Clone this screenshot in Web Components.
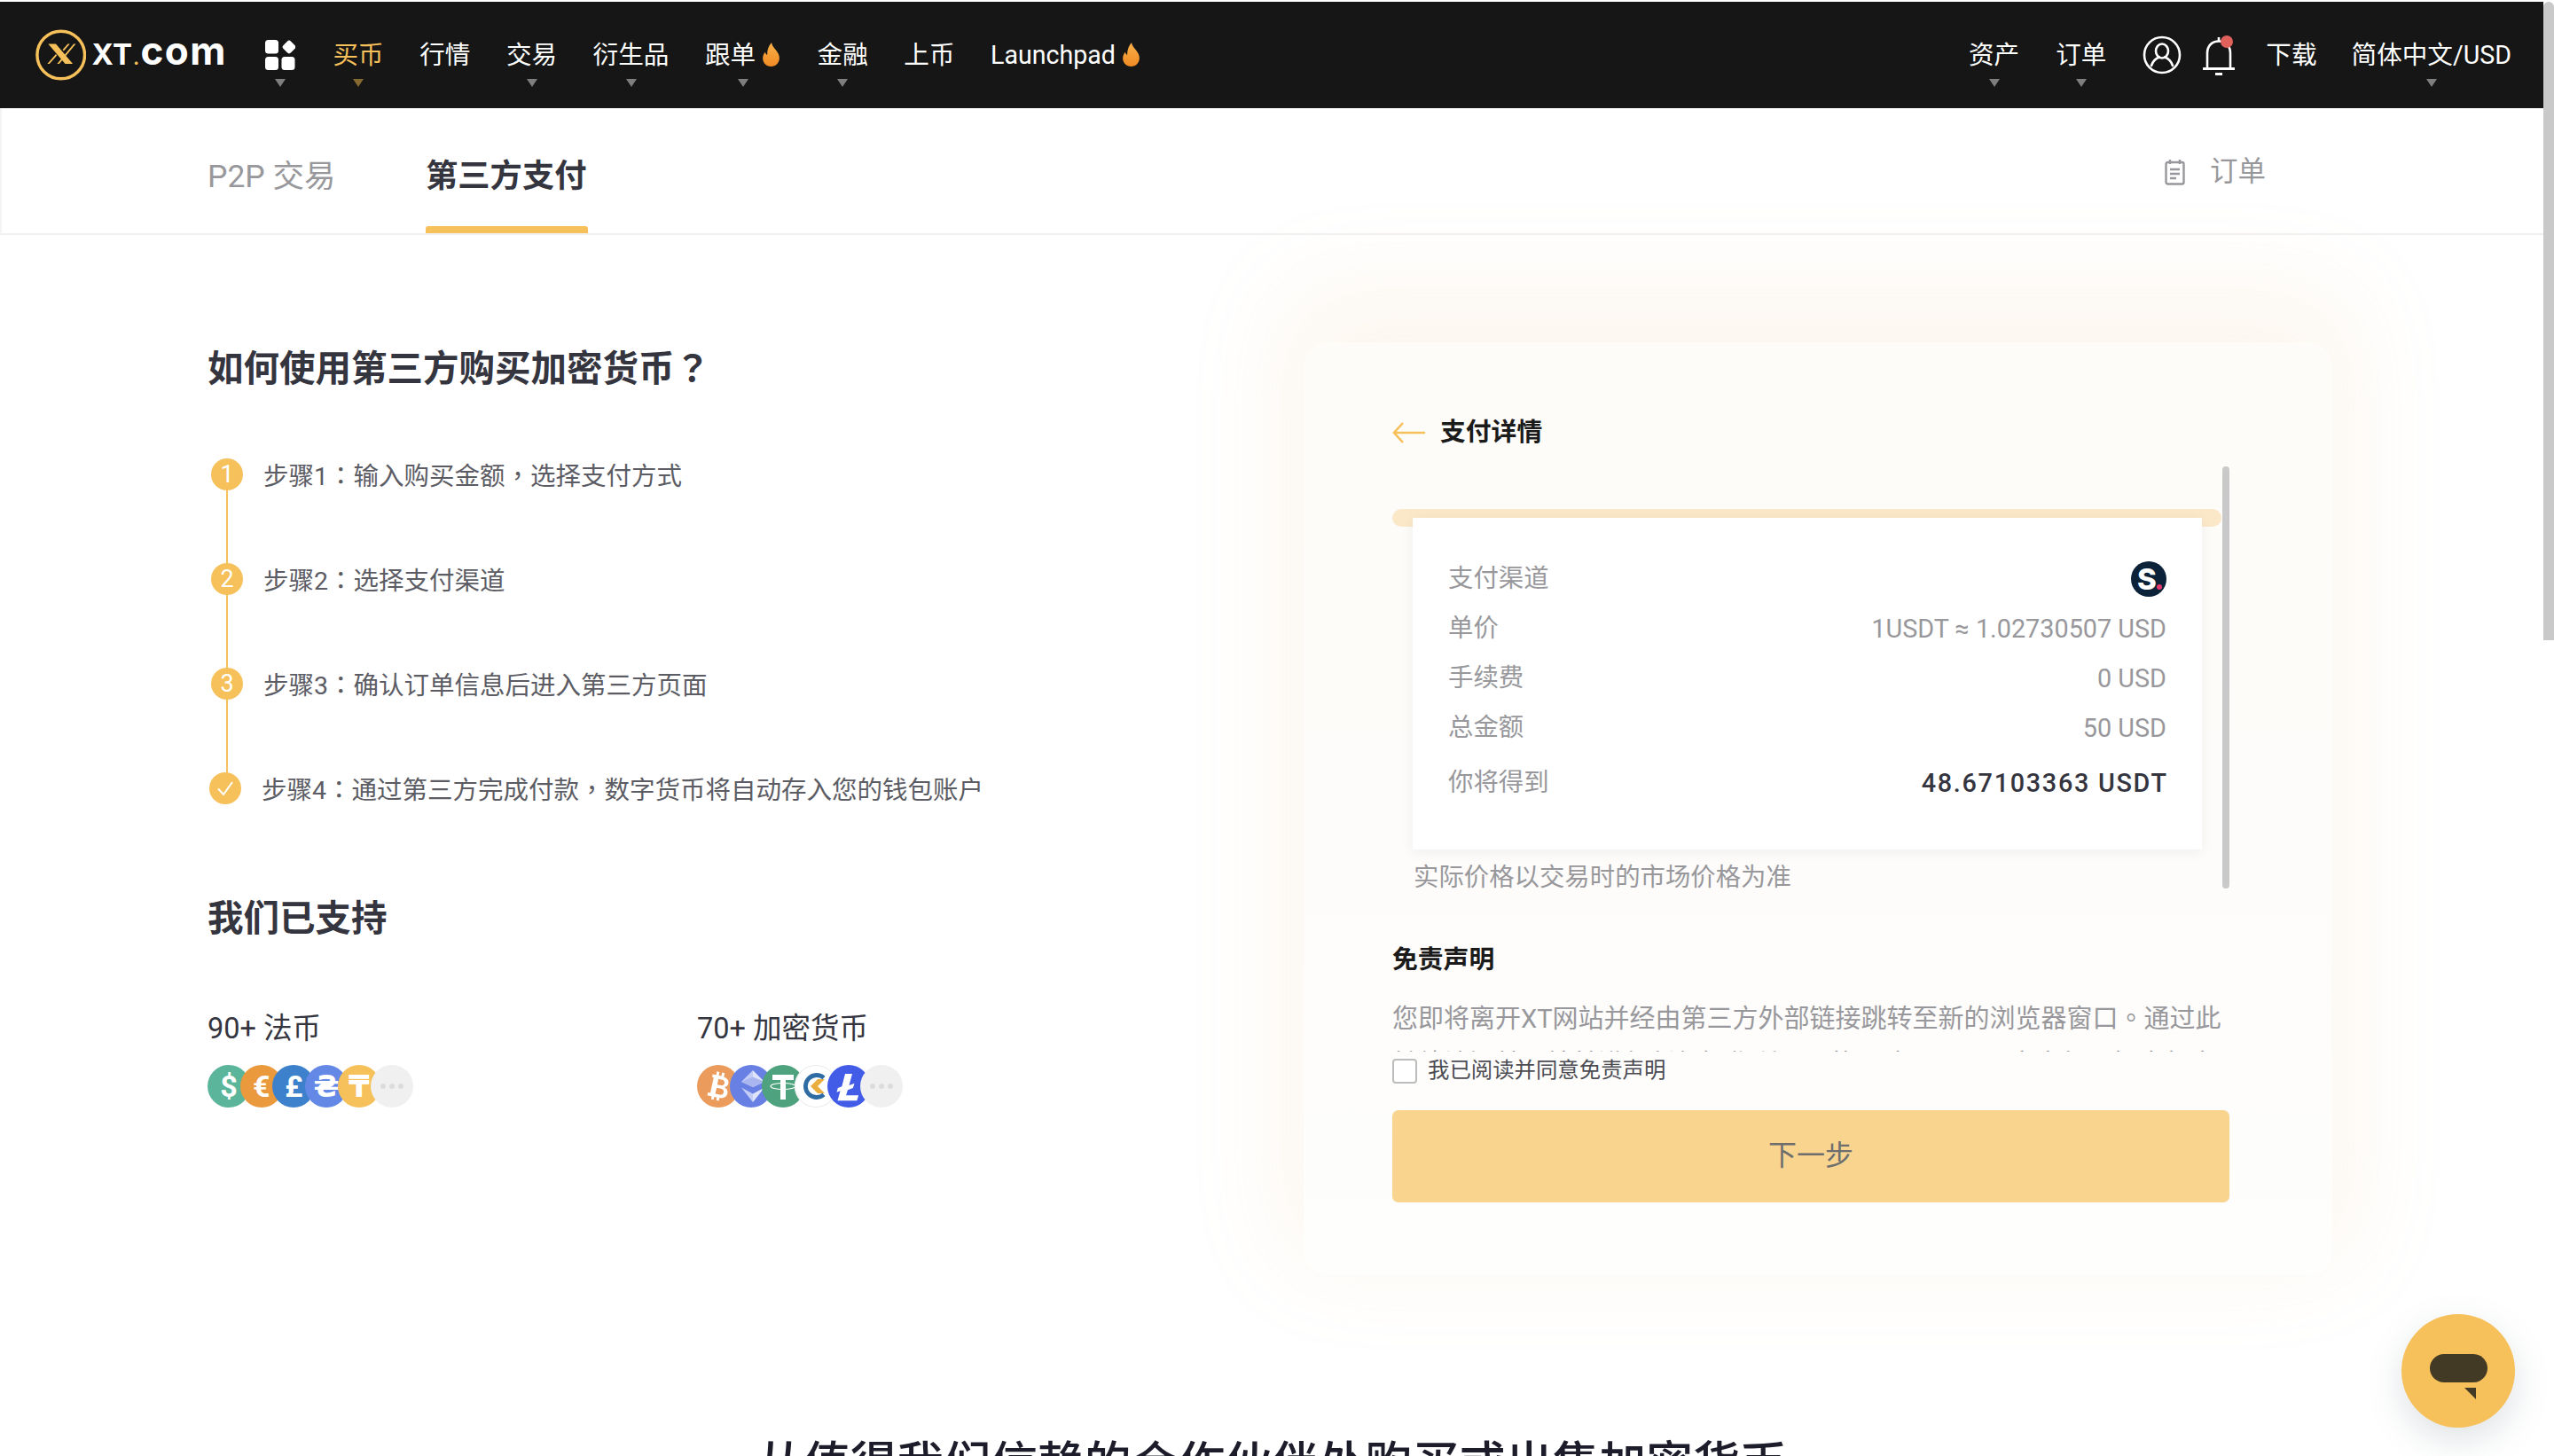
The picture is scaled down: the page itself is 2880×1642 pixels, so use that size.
<!DOCTYPE html>
<html lang="zh-CN">
<head>
<meta charset="utf-8">
<title>XT.COM</title>
<style>
  html, body { margin: 0; padding: 0; height: 100%; overflow: hidden; background: #fff; }
  body { font-family: Roboto, "Noto Sans CJK SC", sans-serif; }
</style>
</head>
<body>
<xt-app></xt-app>

<script>
var FONT = 'Roboto, "Noto Sans CJK SC", sans-serif';
var YELLOW = "#f6c05a";
// centred CJK punctuation, like the reference (locl off or zh-CN turns it back to the SC glyph)
var PUNCT = 'font-family: "Noto Sans CJK TC", sans-serif; font-feature-settings: "locl" 0;';

var FLAME = `<svg width="23" height="27" viewBox="0 0 22 26" style="display:block">
  <defs><linearGradient id="fl" x1="0" y1="0" x2="0" y2="1"><stop offset="0" stop-color="#f8b04a"/><stop offset="1" stop-color="#f08a24"/></linearGradient></defs>
  <path fill="url(#fl)" d="M11.500 0c.6 3.600 2.500 5.400 4.800 8.300 2.200 2.800 3.700 5.400 3.700 8.500 0 5-3.800 9.200-9 9.200s-9-4-9-8.900c0-2.700 1-4.900 2.600-6.800.4 1.500 1.100 2.500 2.200 3.100C6.600 8.400 8.300 3.300 11.500 0z"/>
</svg>`;

// ---------- nav item ----------
class XtNavItem extends HTMLElement {
  constructor() {
    super();
    this.attachShadow({ mode: "open" });
    this.shadowRoot.innerHTML = `
    <style>
      :host { display: flex; flex-direction: column; align-items: center; padding-top: 39.500px; box-sizing: border-box; height: 120px;
              color: #fff; font: 28.600px/40px ${FONT}; flex: none; }
      :host([active]) { color: ${YELLOW}; }
      .txt { display: flex; align-items: center; gap: 6px; height: 40px; white-space: nowrap; }
      .caret { margin-top: 7.500px; width: 0; height: 0; border-left: 6.500px solid transparent; border-right: 6.500px solid transparent; border-top: 9px solid #7e7e7e; }
      :host([active]) .caret { border-top-color: #85682f; }
      :host(:not([caret])) .caret { visibility: hidden; }
    </style>
    <div class="txt"><slot></slot></div>
    <div class="caret"></div>`;
  }
}
customElements.define("xt-nav-item", XtNavItem);

// ---------- header ----------
class XtHeader extends HTMLElement {
  connectedCallback() {
    this.attachShadow({ mode: "open" });
    this.shadowRoot.innerHTML = `
    <style>
      :host { display: flex; align-items: flex-start; height: 120px; background: #161616; padding: 0 36px 0 40px; flex: none; }
      .logo { display: flex; align-items: center; height: 120px; gap: 6px; flex: none; width: 216px; }
      .word { color: #fff; font: 700 33px/60px Inter, sans-serif; white-space: nowrap; letter-spacing: .4px; display: flex; align-items: baseline; }
      .word b { color: ${YELLOW}; font-size: 18px; margin: 0 1px 0 1px; }
      .word i { font: 700 44px/60px Inter, sans-serif; font-style: normal; letter-spacing: 1.500px; }
      nav { display: flex; gap: 40.500px; margin-left: 43px; }
      .right { display: flex; margin-left: auto; }
      .ic { flex: none; display: flex; padding-top: 38px; height: 82px; }
      .ic svg { display: block; }
    </style>
    <div class="logo">
      <svg width="60" height="60" viewBox="0 0 60 60">
        <circle cx="30" cy="30" r="28" fill="none" stroke="${YELLOW}" stroke-width="3.600"/>
        <path fill="${YELLOW}" d="M15 17h9l20 23.500h-9z"/>
        <path fill="${YELLOW}" d="M45 17h2.500L28 40.500h-2.500zM38 17h2.500l-7.200 8.300-1.300-1.500zM14 40.500h2.500l8.800-10-1.300-1.500z"/>
      </svg>
      <div class="word"><span>XT</span><b>.</b><i>com</i></div>
    </div>
    <nav>
      <xt-nav-item caret style="width:34px;margin-right:2px">
        <svg width="34" height="34" viewBox="0 0 34 34" style="display:block">
          <rect x="0" y="0" width="15" height="15.500" rx="3.500" fill="#fff"/>
          <rect x="21" y="2" width="12" height="12" rx="3" fill="#fff" transform="rotate(45 27 8)"/>
          <rect x="0" y="19" width="15" height="15" rx="3.500" fill="#fff"/>
          <rect x="18.500" y="19" width="15" height="15" rx="3.500" fill="#fff"/>
        </svg>
      </xt-nav-item>
      <xt-nav-item caret active>买币</xt-nav-item>
      <xt-nav-item>行情</xt-nav-item>
      <xt-nav-item caret>交易</xt-nav-item>
      <xt-nav-item caret>衍生品</xt-nav-item>
      <xt-nav-item caret>跟单${FLAME}</xt-nav-item>
      <xt-nav-item caret>金融</xt-nav-item>
      <xt-nav-item>上币</xt-nav-item>
      <xt-nav-item>Launchpad${FLAME}</xt-nav-item>
    </nav>
    <div class="right">
      <xt-nav-item caret>资产</xt-nav-item>
      <xt-nav-item caret style="margin-left:41px">订单</xt-nav-item>
      <div class="ic" style="margin-left:41px">
        <svg width="44" height="44" viewBox="0 0 44 44" fill="none" stroke="#fff" stroke-width="2.600">
          <circle cx="22" cy="22" r="20"/>
          <ellipse cx="22" cy="17.500" rx="7" ry="8"/>
          <path d="M10 34c2-6 6-8.500 9-9.500M34 34c-2-6-6-8.500-9-9.500" stroke-linecap="round"/>
        </svg>
      </div>
      <div class="ic" style="margin-left:24px">
        <svg width="36" height="46" viewBox="0 0 36 46" fill="none" stroke="#fff" stroke-width="2.600">
          <path d="M5 37V20C5 12 10 6.500 18 6.500S31 12 31 20v17"/>
          <path d="M1 37.500h34" stroke-width="3" stroke-linecap="round"/>
          <path d="M18 2v4.500"/>
          <path d="M14 43.500h8" stroke-width="3"/>
          <circle cx="27" cy="7" r="7" fill="#e0605c" stroke="none"/>
        </svg>
      </div>
      <xt-nav-item style="margin-left:35px">下载</xt-nav-item>
      <xt-nav-item caret style="margin-left:39px">简体中文/USD</xt-nav-item>
    </div>`;
  }
}
customElements.define("xt-header", XtHeader);

// ---------- tabs ----------
class XtTabs extends HTMLElement {
  connectedCallback() {
    this.attachShadow({ mode: "open" });
    this.shadowRoot.innerHTML = `
    <style>
      :host { display: flex; align-items: flex-start; height: 143px; box-sizing: border-box; padding: 0 238px 0 232px; flex: none;
              border-bottom: 2px solid #f2f1ef; border-left: 2px solid #f4f4f4; font-family: ${FONT}; position: relative; z-index: 1; }
      .tab { font-size: 35.500px; line-height: 50px; margin-top: 52px; height: 89px; box-sizing: border-box; color: #98989c; white-space: nowrap; width: 246px; flex: none; }
      .tab.on { color: #35353f; font-weight: 700; font-size: 36.300px; width: 183px; }
      .bar { height: 8px; background: ${YELLOW}; border-radius: 3px 3px 0 0; margin-top: 31px; }
      .orders { margin-left: auto; margin-right: 75px; margin-top: 52px; display: flex; align-items: center; gap: 28px; color: #98989c; font-size: 31.500px; line-height: 40px; }
    </style>
    <div class="tab">P2P 交易</div>
    <div class="tab on">第三方支付<div class="bar"></div></div>
    <div class="orders">
      <svg width="23" height="30" viewBox="0 0 23 30" fill="none" stroke="#98989c" stroke-width="2.400">
        <rect x="1.500" y="4" width="20" height="24.500" rx="2"/>
        <path d="M6 1v5M17 1v5M6 12h11M6 17h11M6 22h7"/>
      </svg>
      <span>订单</span>
    </div>`;
  }
}
customElements.define("xt-tabs", XtTabs);

// ---------- steps ----------
class XtStep extends HTMLElement {
  connectedCallback() {
    var last = this.hasAttribute("last");
    var mark = last
      ? `<svg width="22" height="22" viewBox="0 0 22 22" fill="none" stroke="#fff" stroke-width="2"><path d="M3 11.500l6 6.500L19 4"/></svg>`
      : this.getAttribute("n");
    this.attachShadow({ mode: "open" });
    this.shadowRoot.innerHTML = `
    <style>
      :host { display: flex; gap: 23px; height: ${last ? 36 : 118}px; ${last ? "margin-left:-2px" : ""}; font-family: ${FONT}; }
      .m { width: 36px; display: flex; flex-direction: column; align-items: center; flex: none; }
      .c { width: 36px; height: 36px; border-radius: 50%; background: ${YELLOW}; color: #fff; font-size: 27px; line-height: 36px; text-align: center;
           display: flex; align-items: center; justify-content: center; flex: none; }
      .l { width: 2px; flex: 1; background: ${YELLOW}; margin-left: -1px; }
      .t { font-size: 28.500px; line-height: 36px; color: #5c5c64; white-space: nowrap; }
    </style>
    <div class="m"><div class="c">${mark}</div>${last ? "" : '<div class="l"></div>'}</div>
    <div class="t"><slot></slot></div>`;
  }
}
customElements.define("xt-step", XtStep);

// ---------- coin ----------
class XtCoin extends HTMLElement {
  connectedCallback() {
    this.attachShadow({ mode: "open" });
    this.shadowRoot.innerHTML = `
    <style>
      :host { display: flex; width: 48px; height: 48px; border-radius: 50%; flex: none; margin-left: -11.300px; align-items: center; justify-content: center;
              background: ${this.getAttribute("color")}; color: #fff; font: 700 34px/48px Roboto, "DejaVu Sans", sans-serif; overflow: hidden; position: relative; }
      :host(:first-child) { margin-left: 0; }
    </style>
    <slot></slot>`;
  }
}
customElements.define("xt-coin", XtCoin);

// ---------- left column ----------
class XtGuide extends HTMLElement {
  connectedCallback() {
    this.attachShadow({ mode: "open" });
    this.shadowRoot.innerHTML = `
    <style>
      :host { display: block; font-family: ${FONT}; color: #35353f; margin-top: -1px; }
      h2 { margin: 0; font-size: 40.500px; line-height: 56px; font-weight: 700; }
      h2 span { ${PUNCT} font-weight: 700; }
      .steps { margin: 73px 0 0 4px; display: flex; flex-direction: column; }
      .steps span { ${PUNCT} }
      .sup { margin-top: 101px; }
      .cols { display: grid; grid-template-columns: 552px 552px; margin-top: 74px; }
      .lab { font-size: 32.500px; line-height: 44px; }
      .coins { display: flex; margin-top: 19px; }
      .coins svg { display: block; }
    </style>
    <h2>如何使用第三方购买加密货币<span>？</span></h2>
    <div class="steps">
      <xt-step n="1">步骤1<span>：</span>输入购买金额<span>，</span>选择支付方式</xt-step>
      <xt-step n="2">步骤2<span>：</span>选择支付渠道</xt-step>
      <xt-step n="3">步骤3<span>：</span>确认订单信息后进入第三方页面</xt-step>
      <xt-step last>步骤4<span>：</span>通过第三方完成付款<span>，</span>数字货币将自动存入您的钱包账户</xt-step>
    </div>
    <h2 class="sup">我们已支持</h2>
    <div class="cols">
      <div>
        <div class="lab">90+ 法币</div>
        <div class="coins">
          <xt-coin color="#5bb59a">$</xt-coin>
          <xt-coin color="#ea9a3d">€</xt-coin>
          <xt-coin color="#3d80cc">£</xt-coin>
          <xt-coin color="#6488e6">₴</xt-coin>
          <xt-coin color="#f6c05a">₸</xt-coin>
          <xt-coin color="#f0f0f0">
            <svg width="28" height="8" viewBox="0 0 28 8" fill="#dcdcdc"><circle cx="4" cy="4" r="3"/><circle cx="14" cy="4" r="3"/><circle cx="24" cy="4" r="3"/></svg>
          </xt-coin>
        </div>
      </div>
      <div>
        <div class="lab">70+ 加密货币</div>
        <div class="coins">
          <xt-coin color="#eb9b5c">
            <svg width="48" height="48" viewBox="0 0 48 48" fill="#fff"><g transform="rotate(12 24 24)">
              <path fill-rule="evenodd" d="M15 12h4V8h3v4h3V8h3v4.300c4 .7 6.500 3 6.500 6.200 0 2.400-1.300 4.300-3.500 5.200 3 .9 4.800 3.100 4.800 6 0 3.900-3 6.600-7.800 7V40h-3v-3.300h-3V40h-3v-3.300h-5v-3.400h2.800V15.400H15zM22.500 16v6.500h4.300c2 0 3.300-1.300 3.300-3.200S28.800 16 26.800 16zM22.500 26v7h5c2.300 0 3.800-1.400 3.800-3.500S29.800 26 27.500 26z"/></g></svg>
          </xt-coin>
          <xt-coin color="#6880e4">
            <svg width="48" height="48" viewBox="0 0 48 48">
              <path fill="#c3cdf5" d="M26 6v19l-13-6z"/><path fill="#dfe4fa" d="M26 6v19l13-6z"/>
              <path fill="#a9b6ef" d="M13 19l13 6 13-6-13-5.500z"/>
              <path fill="#c3cdf5" d="M13 25.500L26 42v-9.500z"/><path fill="#dfe4fa" d="M39 25.500L26 42v-9.500z"/>
            </svg>
          </xt-coin>
          <xt-coin color="#4ea37e">
            <svg width="48" height="48" viewBox="0 0 48 48" fill="#fff">
              <path d="M12 11h24v6h-9v22h-6V17h-9z"/>
              <ellipse cx="24" cy="24" rx="14" ry="3.500" fill="none" stroke="#fff" stroke-width="1.100"/>
            </svg>
          </xt-coin>
          <xt-coin color="#fff" style="box-shadow: inset 0 0 0 1px #ececec">
            <svg width="48" height="48" viewBox="0 0 48 48" fill="none">
              <path d="M33 14.500A12.500 12.500 0 1 0 33 33.500" stroke="#2f6ca3" stroke-width="4.800"/>
              <path d="M26 16h8l-8 8 8 8h-8l-8-8z" fill="#e9ae3f"/>
            </svg>
          </xt-coin>
          <xt-coin color="#425ce8">
            <svg width="48" height="48" viewBox="0 0 48 48" fill="#fff"><path d="M20 10h8l-3.500 13 6-2.200-1.600 5.200-6 2.200-1.800 6h14l-1.800 6H11.500l3-11-4 1.500 1.300-4.800 4.500-1.600z"/></svg>
          </xt-coin>
          <xt-coin color="#f0f0f0">
            <svg width="28" height="8" viewBox="0 0 28 8" fill="#dcdcdc"><circle cx="4" cy="4" r="3"/><circle cx="14" cy="4" r="3"/><circle cx="24" cy="4" r="3"/></svg>
          </xt-coin>
        </div>
      </div>
    </div>`;
  }
}
customElements.define("xt-guide", XtGuide);

// ---------- receipt row ----------
class XtRow extends HTMLElement {
  connectedCallback() {
    this.attachShadow({ mode: "open" });
    this.shadowRoot.innerHTML = `
    <style>
      :host { display: flex; justify-content: space-between; align-items: center; height: 56px; font: 28.400px/56px ${FONT}; color: #98989c; }
      :host([strong]) { margin-top: 6px; }
      .v { font-size: 28.800px; margin-top: -1px; }
      :host([strong]) .v { color: #35353f; font-weight: 500; letter-spacing: 1.700px; margin-right: -1.700px; }
    </style>
    <span><slot name="k"></slot></span>
    <span class="v"><slot></slot></span>`;
  }
}
customElements.define("xt-row", XtRow);

// ---------- payment card ----------
class XtPayCard extends HTMLElement {
  connectedCallback() {
    this.attachShadow({ mode: "open" });
    this.shadowRoot.innerHTML = `
    <style>
      :host { display: block; width: 1160px; height: 1052px; box-sizing: border-box; padding: 78px 116px 0 100px; border-radius: 28px; flex: none;
              background: linear-gradient(180deg, #fdfcf9 0%, #fdfcfa 60%, #fefefd 100%);
              box-shadow: 0 -36px 110px 22px rgba(232,184,120,.13); font-family: ${FONT}; }
      .head { display: flex; align-items: center; gap: 17px; height: 40px; font-size: 28.800px; font-weight: 700; color: #1b1b1b; }
      .scroll { display: flex; margin-top: 22px; height: 660px; }
      .inner { width: 936px; overflow: hidden; padding-top: 48px; box-sizing: border-box; flex: none; }
      .thumb { width: 8px; height: 476px; background: #c9c9c9; border-radius: 4px; flex: none; }
      .edge { height: 20px; background: #fbe8c8; border-radius: 10px; width: 935px; }
      .rcpt { background: #fff; width: 890px; height: 374px; margin: -10px 0 0 23px; box-sizing: border-box; padding: 41px 40px 0; position: relative;
              box-shadow: 0 3px 14px rgba(0,0,0,.06); }
      .note { margin: 12px 0 0 24px; font-size: 28.400px; line-height: 40px; color: #98989c; }
      h4 { margin: 52px 0 0; font-size: 28.800px; line-height: 40px; font-weight: 700; color: #1b1b1b; }
      .para { margin: 20px 0 0; font-size: 29px; line-height: 48px; color: #98989c; white-space: nowrap; }
      .para span { ${PUNCT} }
      .agree { display: flex; align-items: flex-start; gap: 12px; margin-top: 8px; height: 28px; font-size: 24.400px; line-height: 26px; color: #4c4c54; white-space: nowrap; }
      .box { width: 28px; height: 28px; box-sizing: border-box; border: 2px solid #bdbdbd; border-radius: 4px; background: #fff; flex: none; }
      .btn { margin-top: 30px; height: 104px; width: 944px; box-sizing: border-box; padding-bottom: 8px; background: #f8d48f; border-radius: 7px; color: #6e6e6e; font-size: 32px; display: flex; align-items: center; justify-content: center; }
      .s { width: 40px; height: 40px; border-radius: 50%; background: #0c2238; color: #fff; font: 800 33px/40px Inter, sans-serif; display: flex; align-items: center; justify-content: center; }
      .s i { width: 6px; height: 6px; border-radius: 50%; background: #e8386d; margin: 19px -2px 0 0; flex: none; }
    </style>
    <div class="head">
      <svg width="37" height="24" viewBox="0 0 37 24" fill="none" stroke="${YELLOW}" stroke-width="2.600" style="margin-top:7px">
        <path d="M37 12H2M12 1L2 12l10 11"/>
      </svg>
      支付详情
    </div>
    <div class="scroll">
      <div class="inner">
        <div class="edge"></div>
        <div class="rcpt">
          <xt-row><span slot="k">支付渠道</span><div class="s">S<i></i></div></xt-row>
          <xt-row><span slot="k">单价</span>1USDT ≈ 1.02730507 USD</xt-row>
          <xt-row><span slot="k">手续费</span>0 USD</xt-row>
          <xt-row><span slot="k">总金额</span>50 USD</xt-row>
          <xt-row strong><span slot="k">你将得到</span>48.67103363 USDT</xt-row>
        </div>
        <div class="note">实际价格以交易时的市场价格为准</div>
        <h4>免责声明</h4>
        <p class="para">您即将离开XT网站并经由第三方外部链接跳转至新的浏览器窗口<span>。</span>通过此<br>继续访问其网站并进行任何操作所需要的风险，需要用户自行承担全部责任<span>。</span>我</p>
      </div>
      <div class="thumb"></div>
    </div>
    <div class="agree"><div class="box"></div>我已阅读并同意免责声明</div>
    <div class="btn">下一步</div>`;
  }
}
customElements.define("xt-pay-card", XtPayCard);

// ---------- chat launcher ----------
class XtChat extends HTMLElement {
  connectedCallback() {
    this.attachShadow({ mode: "open" });
    this.shadowRoot.innerHTML = `
    <style>
      :host { position: absolute; left: 2708px; top: 1482px; width: 128px; height: 128px; border-radius: 50%; background: ${YELLOW};
              box-shadow: 0 14px 40px rgba(90,110,120,.2); display: block; }
      svg { display: block; }
    </style>
    <svg width="128" height="128" viewBox="0 0 128 128">
      <rect x="32" y="45" width="65" height="32" rx="16" fill="#433a26"/>
      <path d="M71 83h13v13z" fill="#433a26"/>
    </svg>`;
  }
}
customElements.define("xt-chat", XtChat);

// ---------- page ----------
class XtApp extends HTMLElement {
  connectedCallback() {
    this.attachShadow({ mode: "open" });
    this.shadowRoot.innerHTML = `
    <style>
      :host { display: flex; width: 2880px; height: 1642px; overflow: hidden; position: relative; background: #fff; font-family: ${FONT}; }
      .page { width: 2868px; flex: none; display: flex; flex-direction: column; padding-top: 2px; box-sizing: border-box; background: #fff; }
      .main { display: flex; justify-content: space-between; padding: 121px 238px 0 234px; flex: none; }
      .more { margin: 177px 0 0; text-align: center; font-size: 52.800px; line-height: 72px; font-weight: 500; color: #1c1c2b; white-space: nowrap; }
      .sb { width: 12px; flex: none; padding-top: 2px; background: #fff; }
      .sb div { height: 720px; background: #c9c9c9; border-radius: 6px 6px 0 0; }
    </style>
    <div class="page">
      <xt-header></xt-header>
      <xt-tabs></xt-tabs>
      <div class="main">
        <xt-guide></xt-guide>
        <xt-pay-card></xt-pay-card>
      </div>
      <h2 class="more">从值得我们信赖的合作伙伴处购买或出售加密货币</h2>
    </div>
    <div class="sb"><div></div></div>
    <xt-chat></xt-chat>`;
  }
}
customElements.define("xt-app", XtApp);
</script>
</body>
</html>
